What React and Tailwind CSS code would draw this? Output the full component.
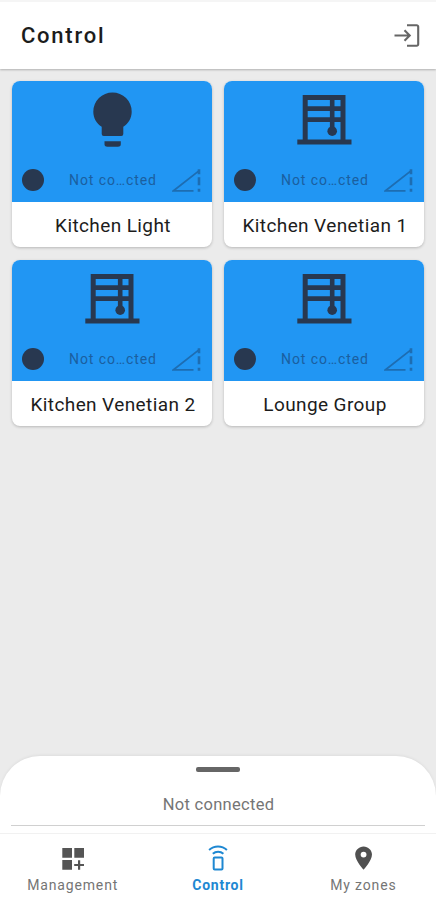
// Control screen: device tiles, status sheet and bottom navigation

import React from 'react';

const devices = [
    { name: 'Kitchen Light', type: 'light' },
    { name: 'Kitchen Venetian 1', type: 'blind' },
    { name: 'Kitchen Venetian 2', type: 'blind' },
    { name: 'Lounge Group', type: 'blind' },
];

const BulbIcon = () => (
    <svg className="w-[60px] h-[60px]" viewBox="0 0 60 60" fill="#283850">
        <path d="M30.5 2.5a19.2 19.2 0 0 0-19.2 19.2c0 6.5 3.3 11.6 8.4 15.1v7.2a2 2 0 0 0 2 2h17.6a2 2 0 0 0 2-2v-7.2c5.1-3.5 8.4-8.6 8.4-15.1A19.2 19.2 0 0 0 30.5 2.5z" />
        <path d="M22.5 51.3h16.3v2.2a3 3 0 0 1-3 3.3H25.5a3 3 0 0 1-3-3.3z" />
    </svg>
);

const BlindIcon = () => (
    <svg className="w-[60px] h-[60px]" viewBox="0 0 60 60" fill="none" stroke="#283850" strokeWidth="5">
        <path d="M11.2 50.5V7.5h37.8v43" />
        <path d="M11 18.7h38M11 29.7h38" strokeWidth="4.8" />
        <path d="M38.2 7v34" strokeWidth="4.6" />
        <path d="M3.3 52h54.2" strokeWidth="5.2" />
        <circle cx="38.2" cy="41.2" r="4.8" fill="#283850" stroke="none" />
    </svg>
);

const SignalIcon = () => (
    <svg className="w-[30px] h-[24px]" viewBox="0 0 30 24" fill="none" stroke="#1d6db2" strokeWidth="1.8">
        <path d="M21.5 22.8H1.5L27.2 2.6" />
        <path d="M27 1.2v5M27 9.2v8M27 20.7v3" strokeWidth="2.6" />
    </svg>
);

const DeviceCard = ({ name, type }) => (
    <div className="h-[166px] rounded-[8px] bg-white shadow-[0_1px_3px_rgba(0,0,0,0.22)] overflow-hidden">
        <div className="h-[121px] bg-[#2196f3] flex flex-col items-center justify-between pt-[9px] pb-[9px]">
            {type === 'light' ? <BulbIcon /> : <BlindIcon />}
            <div className="w-full flex items-center justify-between px-[10px] pb-px">
                <span className="w-[22px] h-[22px] rounded-full bg-[#283850]" />
                <span className="pl-[10px] text-[14px] leading-[20px] tracking-[0.9px] text-[#1b5f9f]">Not co…cted</span>
                <SignalIcon />
            </div>
        </div>
        <div className="h-[45px] flex items-center justify-center pt-[4px] pl-[2px] text-[19px] tracking-[0.4px] text-[#1c1c1c] whitespace-nowrap">
            {name}
        </div>
    </div>
);

const ManagementIcon = () => (
    <svg className="w-[24px] h-[24px]" viewBox="0 0 24 24" fill="#555555">
        <path d="M1.3 1h9.7v9.7H1.3zM13.3 1H23v9.7h-9.7zM1.3 13H11v9.7H1.3zM17 13.2h2.2v3.7H23v2.2h-3.8v3.7H17v-3.7h-3.8v-2.2H17z" />
    </svg>
);

const RemoteIcon = () => (
    <svg className="w-[24px] h-[28px]" viewBox="0 0 24 28" fill="none" stroke="#1e88d2" strokeWidth="2">
        <rect x="7.7" y="12.5" width="8.8" height="12" rx="1" />
        <path d="M3.1 4.9c5-4.7 12.8-4.7 17.8 0M6.8 8.7c3-2.7 7.6-2.7 10.6 0" />
    </svg>
);

const PinIcon = () => (
    <svg className="w-[28px] h-[28px]" viewBox="0 0 24 24" fill="#505050">
        <path d="M12.5 1.2C8.63 1.2 5.3 4.33 5.3 8.2c0 5.25 7.2 13 7.2 13s7.2-7.75 7.2-13c0-3.87-3.33-7-7.2-7zm0 9.5a2.5 2.5 0 0 1 0-5 2.5 2.5 0 0 1 0 5z" />
    </svg>
);

const NavItem = ({ icon, label, active }) => (
    <div className="flex flex-col items-center pt-[9px]">
        <div className="h-[31px] flex items-center justify-center">{icon}</div>
        <span className={active
            ? 'pt-px text-[14px] leading-[20px] font-bold tracking-[0.75px] text-[#1e88d2]'
            : 'pt-px text-[14px] leading-[20px] tracking-[0.85px] text-[#757575]'}
        >
            {label}
        </span>
    </div>
);

export default function App() {
    return (
        <div className="w-[436px] h-[900px] flex flex-col bg-[#ebebeb] font-[Roboto,sans-serif] overflow-hidden">
            <header className="h-[69px] shrink-0 bg-white border-t-2 border-[#f5f5f5] shadow-[0_1px_2px_rgba(0,0,0,0.25)] flex items-center justify-between pl-[21px] pr-[16px]">
                <h1 className="pt-px text-[22px] leading-[30px] font-medium tracking-[1.75px] text-[#1c1c1c]">Control</h1>
                <svg className="w-[26px] h-[26px]" viewBox="0 0 26 26" fill="none" stroke="#666666" strokeWidth="2.1">
                    <path d="M13 2.3h9.7a1.5 1.5 0 0 1 1.5 1.5v17.4a1.5 1.5 0 0 1-1.5 1.5H13" />
                    <path d="M0.5 12.5h15.5M10.5 7.3l5.2 5.2-5.2 5.2" />
                </svg>
            </header>

            <main className="flex-1 grid grid-cols-2 gap-x-[12px] gap-y-[13px] content-start px-[12px] pt-[12px]">
                {devices.map((device) => (
                    <DeviceCard key={device.name} {...device} />
                ))}
            </main>

            <section className="h-[77px] shrink-0 bg-white rounded-t-[40px] shadow-[0_-1px_3px_rgba(0,0,0,0.06)] flex flex-col items-center px-[11px]">
                <div className="mt-[11px] w-[44px] h-[5px] rounded-[2px] bg-[#666666]" />
                <div className="mt-[21px] h-[24px] pl-px text-[16.5px] leading-[24px] tracking-[0.3px] text-[#757575]">Not connected</div>
                <div className="mt-[8px] w-full h-px bg-[#d0d0d0]" />
            </section>

            <nav className="h-[67px] shrink-0 bg-white border-t border-[#f1f1f1] grid grid-cols-3">
                <NavItem icon={<ManagementIcon />} label="Management" />
                <NavItem icon={<RemoteIcon />} label="Control" active />
                <NavItem icon={<PinIcon />} label="My zones" />
            </nav>
        </div>
    );
}
